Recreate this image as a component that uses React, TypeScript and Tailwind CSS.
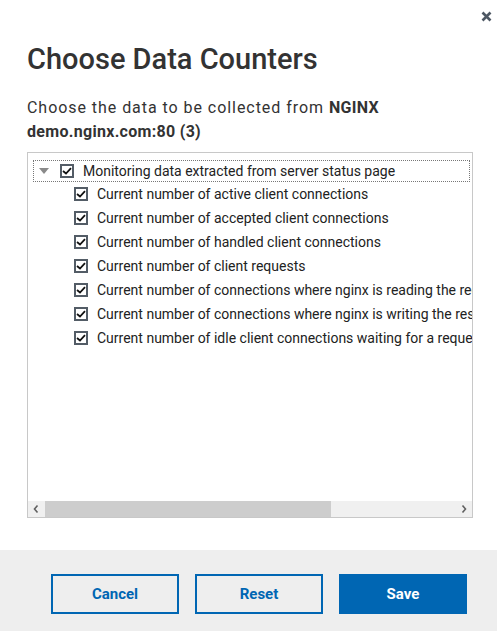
import React from "react";

const items = [
  "Current number of active client connections",
  "Current number of accepted client connections",
  "Current number of handled client connections",
  "Current number of client requests",
  "Current number of connections where nginx is reading the request header",
  "Current number of connections where nginx is writing the response back to the client",
  "Current number of idle client connections waiting for a request",
];

function Box() {
  return (
    <span className="flex h-[14px] w-[14px] shrink-0 items-center justify-center border-2 border-[#535c66] bg-white">
      <svg width="10" height="8" viewBox="0 0 10 8">
        <path d="M1 4 L4 6.5 L9 1.2" fill="none" stroke="#111" strokeWidth="1.8" />
      </svg>
    </span>
  );
}

export default function App() {
  return (
    <div
      className="relative flex h-[631px] w-[497px] flex-col bg-white text-[#333]"
      style={{ fontFamily: "Roboto, 'Liberation Sans', sans-serif" }}
    >
      <button className="absolute right-[5px] top-[11px] p-0">
        <svg width="11" height="11" viewBox="0 0 11 11">
          <path d="M1.5 1.5 L9.5 9.5 M9.5 1.5 L1.5 9.5" stroke="#4d5763" strokeWidth="2.6" />
        </svg>
      </button>
      <div className="px-[27px] pt-[41px]">
        <h1 className="text-[29px] font-medium leading-[36px] text-[#333]">Choose Data Counters</h1>
        <p className="mt-[19px] text-[16px] leading-[24px] text-[#333]">
          <span className="tracking-[0.95px]">Choose the data to be collected from </span>
          <span className="font-bold tracking-[0.3px]">NGINX demo.nginx.com:80 (3)</span>
        </p>
        <div className="mt-[8px] flex h-[366px] w-[446px] flex-col border border-[#c8c8c8]">
          <div className="flex-1 overflow-hidden pl-[5px] pt-[7px]">
            <div className="w-[437px] text-[14px] leading-[24px] text-[#222]">
              <div className="flex h-[22px] items-center border border-dotted border-[#777]">
                <svg width="10" height="6" viewBox="0 0 10 6" className="ml-[5px]">
                  <path d="M0 0 L10 0 L5 6 Z" fill="#8a8a8a" />
                </svg>
                <span className="ml-[11px]">
                  <Box />
                </span>
                <span className="ml-[9px] whitespace-nowrap">Monitoring data extracted from server status page</span>
              </div>
              {items.map((t) => (
                <div key={t} className="flex h-[24px] items-center pl-[41px]">
                  <Box />
                  <span className="ml-[9px] whitespace-nowrap">{t}</span>
                </div>
              ))}
            </div>
          </div>
          <div className="flex h-[16px] items-center bg-[#f0f0f0]">
            <svg width="17" height="16" viewBox="0 0 17 16" className="shrink-0">
              <path d="M9.5 4.5 L6.5 8 L9.5 11.5" fill="none" stroke="#606060" strokeWidth="1.6" />
            </svg>
            <div className="h-[16px] w-[286px] bg-[#cdcdcd]" />
            <div className="flex-1" />
            <svg width="17" height="16" viewBox="0 0 17 16" className="shrink-0">
              <path d="M7.5 4.5 L10.5 8 L7.5 11.5" fill="none" stroke="#606060" strokeWidth="1.6" />
            </svg>
          </div>
        </div>
      </div>
      <div className="mt-auto flex h-[81px] gap-[16px] bg-[#eeeeee] pl-[51px] pt-[24px]">
        <button className="h-[40px] w-[128px] border-2 border-[#0066b3] text-[15px] font-bold text-[#0066b3]">
          Cancel
        </button>
        <button className="h-[40px] w-[128px] border-2 border-[#0066b3] text-[15px] font-bold text-[#0066b3]">
          Reset
        </button>
        <button className="h-[40px] w-[128px] bg-[#0066b3] text-[15px] font-bold text-white">Save</button>
      </div>
    </div>
  );
}
